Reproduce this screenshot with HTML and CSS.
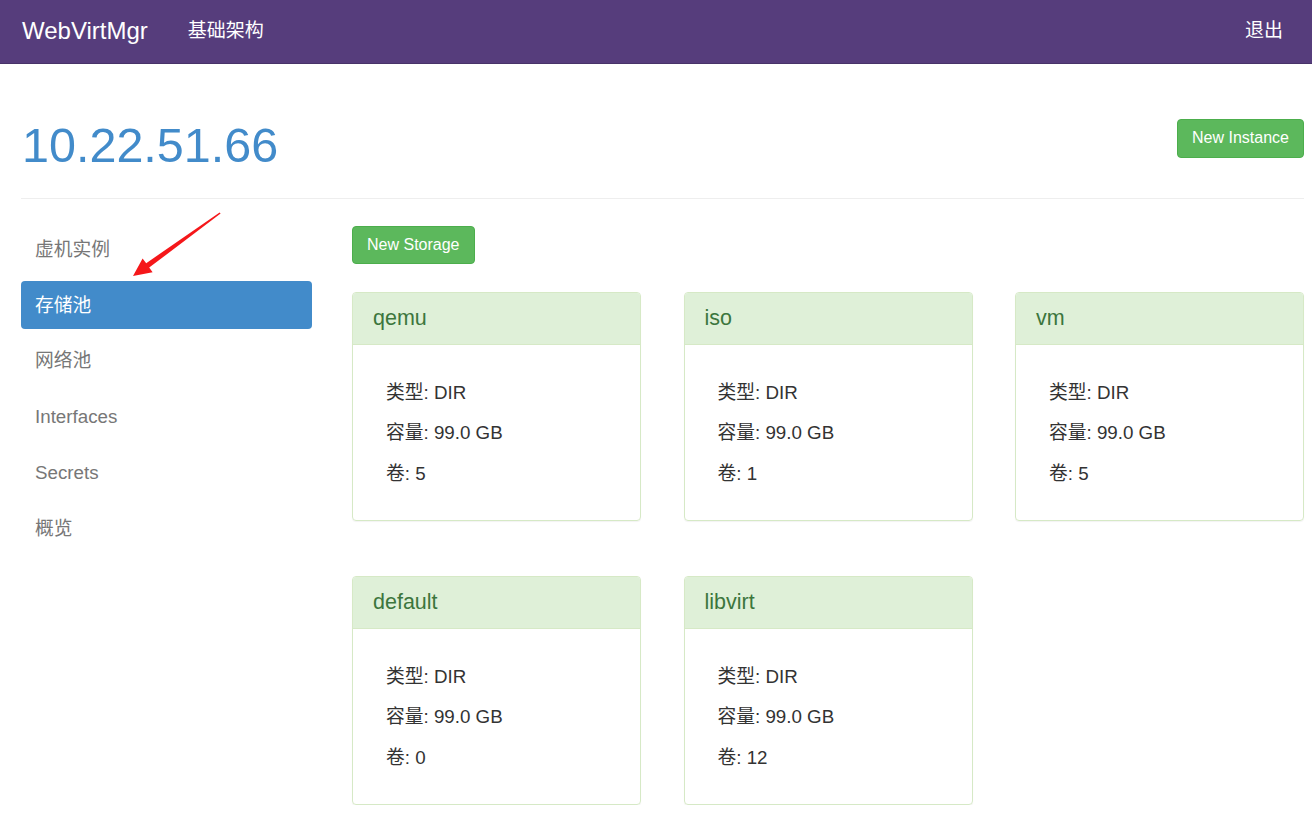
FILE: index.html
```html
<!DOCTYPE html>
<html lang="zh-CN">
<head>
<meta charset="utf-8">
<title>WebVirtMgr</title>
<link rel="stylesheet" href="styles.css">
</head>
<body>
<header class="navbar">
  <div class="navbar-left">
    <a class="brand" href="#">WebVirtMgr</a>
    <a class="nav-link" href="#">基础架构</a>
  </div>
  <a class="nav-link" href="#">退出</a>
</header>

<div class="container">
  <div class="page-header">
    <h1 class="host">10.22.51.66</h1>
    <a class="btn btn-success" href="#">New Instance</a>
  </div>

  <div class="layout">
    <nav class="sidenav">
      <a href="#">虚机实例</a>
      <a class="active" href="#">存储池</a>
      <a href="#">网络池</a>
      <a href="#">Interfaces</a>
      <a href="#">Secrets</a>
      <a href="#">概览</a>
    </nav>

    <main class="content">
      <a class="btn btn-success" href="#">New Storage</a>
      <div class="pool-grid">
        <div class="pool">
          <div class="pool-head">qemu</div>
          <div class="pool-body"><p>类型: DIR</p><p>容量: 99.0 GB</p><p>卷: 5</p></div>
        </div>
        <div class="pool">
          <div class="pool-head">iso</div>
          <div class="pool-body"><p>类型: DIR</p><p>容量: 99.0 GB</p><p>卷: 1</p></div>
        </div>
        <div class="pool">
          <div class="pool-head">vm</div>
          <div class="pool-body"><p>类型: DIR</p><p>容量: 99.0 GB</p><p>卷: 5</p></div>
        </div>
        <div class="pool">
          <div class="pool-head">default</div>
          <div class="pool-body"><p>类型: DIR</p><p>容量: 99.0 GB</p><p>卷: 0</p></div>
        </div>
        <div class="pool">
          <div class="pool-head">libvirt</div>
          <div class="pool-body"><p>类型: DIR</p><p>容量: 99.0 GB</p><p>卷: 12</p></div>
        </div>
      </div>
    </main>
  </div>
</div>

<svg class="annotation" width="240" height="290" viewBox="0 0 240 290">
  <polygon fill="#f5171a" points="133,276 142.6,258.6 146.2,263.2 219.6,212.4 220.6,213.6 149.2,267.6 152.6,272.2"/>
</svg>
</body>
</html>
```

FILE: styles.css
```css
* { box-sizing: border-box; }

body {
  margin: 0;
  position: relative;
  font-family: "Liberation Sans", Arial, "Noto Sans CJK SC", sans-serif;
  color: #333;
  background: #fff;
}

a { text-decoration: none; }

.navbar {
  height: 64px;
  background: #563d7c;
  border-bottom: 1px solid #483369;
  display: flex;
  align-items: center;
  justify-content: space-between;
  padding: 0 29px 2px 21px;
}

.navbar-left {
  display: flex;
  align-items: center;
}

.brand {
  color: #fff;
  font-size: 24px;
  line-height: 30px;
  padding-left: 1px;
}

.nav-link {
  color: #fff;
  font-size: 19px;
  line-height: 26px;
}

.navbar-left .nav-link { margin-left: 40px; }

.container {
  padding: 0 8px 0 21px;
}

.page-header {
  display: flex;
  justify-content: space-between;
  align-items: flex-start;
  padding-top: 55px;
  padding-bottom: 26px;
  border-bottom: 1px solid #eee;
}

.host {
  margin: 0 0 0 1px;
  font-size: 48.5px;
  line-height: 52.8px;
  font-weight: normal;
  color: #428bca;
}

.btn {
  display: inline-block;
  font-size: 16px;
  line-height: 22.5px;
  padding: 7px 14px;
  border: 1px solid transparent;
  border-radius: 4px;
}

.btn-success {
  color: #fff;
  background: #5cb85c;
  border-color: #4cae4c;
}

.layout {
  display: flex;
  gap: 40px;
  padding-top: 26.5px;
}

.sidenav {
  width: 291px;
  flex: none;
  display: flex;
  flex-direction: column;
  gap: 7.8px;
}

.sidenav a {
  display: block;
  height: 48px;
  padding: 12.5px 14px 11.5px;
  font-size: 18.75px;
  line-height: 24px;
  color: #777;
  border-radius: 4px;
}

.sidenav a.active {
  background: #428bca;
  color: #fff;
}

.content {
  flex: 1;
  padding-top: 0.5px;
}

.pool-grid {
  margin-top: 28px;
  display: grid;
  grid-template-columns: repeat(3, 1fr);
  column-gap: 42.5px;
  row-gap: 55px;
}

.pool {
  border: 1px solid #d6e9c6;
  border-radius: 4px;
  box-shadow: 0 1px 1px rgba(0, 0, 0, 0.05);
  overflow: hidden;
}

.pool-head {
  height: 52px;
  line-height: 51px;
  padding: 0 20px;
  font-size: 21.5px;
  color: #3c763d;
  background: #dff0d8;
  border-bottom: 1px solid #d6e9c6;
}

.pool-body {
  padding: 27.5px 34px 26px 33px;
}

.pool-body p {
  margin: 0;
  font-size: 18.75px;
  line-height: 40.5px;
  height: 40.5px;
}

.annotation {
  position: absolute;
  top: 0;
  left: 0;
  pointer-events: none;
}
```
